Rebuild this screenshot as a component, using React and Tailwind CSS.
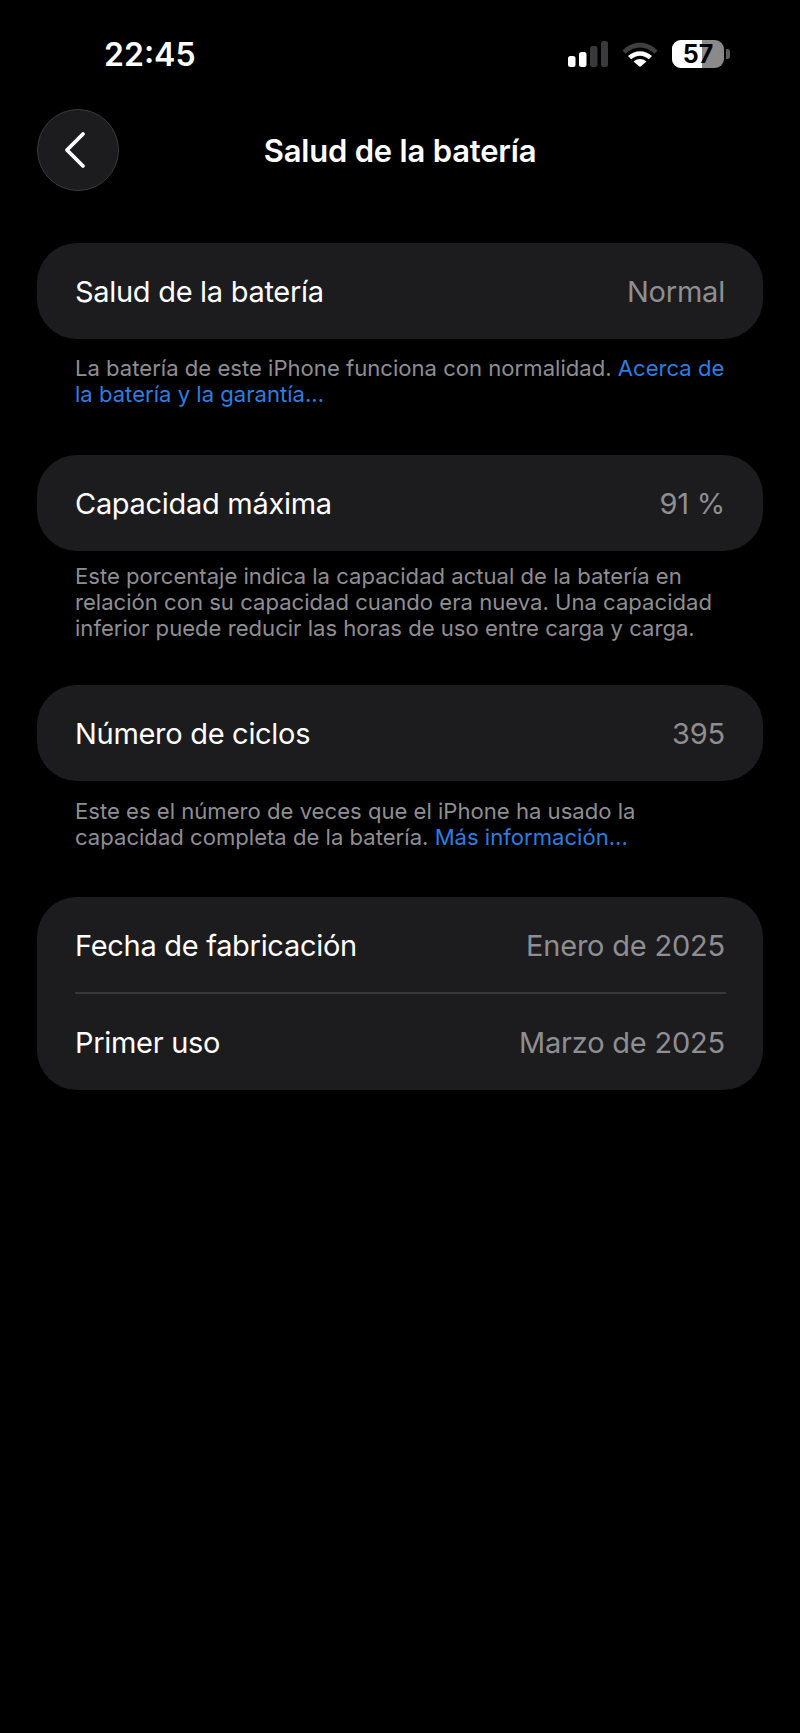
import React from "react";

const font = { fontFamily: "Inter, 'Noto Sans', sans-serif" };

function Row({ label, value, className = "h-[96px] pt-[1px]" }) {
  return (
    <div className={"flex items-center justify-between pl-[38px] pr-[38px] " + className}>
      <span className="text-[29px] text-white tracking-[-0.3px]">{label}</span>
      <span className="text-[29px] text-[#8e8e93] tracking-[-0.2px]">{value}</span>
    </div>
  );
}

function Card({ children, className = "" }) {
  return <div className={"rounded-[40px] bg-[#1c1c1e] " + className}>{children}</div>;
}

function Note({ children, className = "" }) {
  return <p className={"pl-[38px] pr-[32px] text-[22.1px] leading-[26px] text-[#8e8e93] " + className}>{children}</p>;
}

function Signal() {
  return (
    <svg width="40" height="26" viewBox="0 0 40 26" className="block">
      <rect x="0" y="15" width="7.5" height="11" rx="2.5" fill="#fff" />
      <rect x="11" y="11" width="7.5" height="15" rx="2.5" fill="#fff" />
      <rect x="22" y="5" width="7.5" height="21" rx="2.5" fill="#3a3a3c" />
      <rect x="33" y="0" width="7" height="26" rx="2.5" fill="#3a3a3c" />
    </svg>
  );
}

function Wifi() {
  return (
    <svg width="36" height="25" viewBox="0 0 36 25" className="block">
      <path d="M0.5 8.5 C10.5 -1.8 25.5 -1.8 35.5 8.5 L32.5 11.8 C24 3.4 12 3.4 3.5 11.8 Z" fill="#3f3f41" />
      <path d="M6 14 C13 7.5 23 7.5 30 14 L26.8 17.3 C21.5 12.6 14.5 12.6 9.2 17.3 Z" fill="#fff" />
      <path d="M11.5 19.5 C15.5 16.2 20.5 16.2 24.5 19.5 L18 25 Z" fill="#fff" />
    </svg>
  );
}

function Battery() {
  return (
    <div className="flex items-center gap-[2px]">
      <div className="relative h-[28px] w-[52px] overflow-hidden rounded-[9px] bg-[#8a8a8a]">
        <div className="h-full w-[30px] bg-white" />
        <span className="absolute inset-0 flex items-center justify-center text-[25px] font-bold leading-none text-black">57</span>
      </div>
      <div className="h-[10px] w-[4px] rounded-r-[3px] bg-[#5c5c5c]" />
    </div>
  );
}

export default function App() {
  return (
    <div className="min-h-[1733px] w-[800px] bg-black" style={font}>
      <div className="flex h-[109px] items-start justify-between pl-[104px] pr-[70px] pt-[37px]">
        <span className="text-[32px] font-semibold leading-[36px] text-white">22:45</span>
        <div className="mt-[3px] flex items-center">
          <Signal />
          <div className="ml-[14px] mr-[14px]"><Wifi /></div>
          <Battery />
        </div>
      </div>

      <div className="relative flex h-[82px] items-center justify-center px-[37px] pt-[2px]">
        <div className="absolute left-[37px] top-0 flex h-[82px] w-[82px] items-center justify-center rounded-full border border-[#3a3a3c] bg-[#1c1c1e]">
          <svg width="24" height="38" viewBox="0 0 24 38" className="-translate-x-[3px]">
            <path d="M20 3 L4 19 L20 35" fill="none" stroke="#fff" strokeWidth="3.8" strokeLinecap="round" strokeLinejoin="round" />
          </svg>
        </div>
        <h1 className="text-[31px] font-semibold text-white tracking-[-0.2px]">Salud de la batería</h1>
      </div>

      <div className="px-[37px] pt-[52px]">
        <Card><Row label="Salud de la batería" value="Normal" /></Card>
        <Note className="mt-[16px]">
          La batería de este iPhone funciona con normalidad.{" "}
          <span className="text-[#2f7de1]">Acerca de la batería y la garantía...</span>
        </Note>

        <Card className="mt-[48px]"><Row label="Capacidad máxima" value="91 %" /></Card>
        <Note className="mt-[12px]">
          Este porcentaje indica la capacidad actual de la batería en relación con su capacidad cuando era nueva. Una capacidad inferior puede reducir las horas de uso entre carga y carga.
        </Note>

        <Card className="mt-[44px]"><Row label="Número de ciclos" value="395" /></Card>
        <Note className="mt-[17px]">
          Este es el número de veces que el iPhone ha usado la capacidad completa de la batería.{" "}
          <span className="text-[#2f7de1]">Más información...</span>
        </Note>

        <Card className="mt-[47px]">
          <Row label="Fecha de fabricación" value="Enero de 2025" className="h-[95px] pt-[3px]" />
          <div className="ml-[38px] mr-[37px] h-[2px] bg-[#38383a]" />
          <Row label="Primer uso" value="Marzo de 2025" />
        </Card>
      </div>
    </div>
  );
}
